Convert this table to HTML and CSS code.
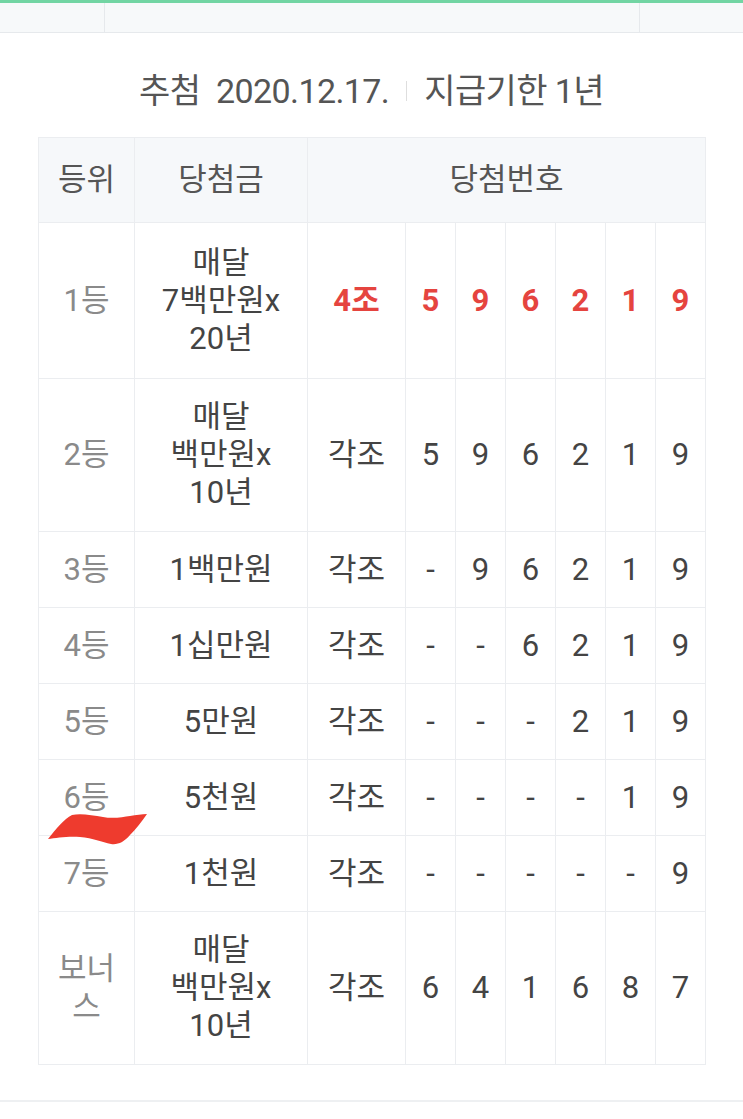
FILE: index.html
```html
<!DOCTYPE html>
<html lang="ko">
<head>
<meta charset="utf-8">
<link rel="stylesheet" href="styles.css">
</head>
<body>
<div class="topbar">
  <div class="tb-cell tb-left"></div>
  <div class="tb-cell tb-mid"></div>
  <div class="tb-cell tb-right"></div>
</div>
<main class="main">
  <h2 class="draw-info"><span>추첨&nbsp; 2020.12.17.</span><i class="sep"></i><span>지급기한 1년</span></h2>
  <div class="table-wrap">
    <table class="result">
      <colgroup>
        <col class="c-rank"><col class="c-prize"><col class="c-group">
        <col class="c-num"><col class="c-num"><col class="c-num"><col class="c-num"><col class="c-num"><col class="c-num">
      </colgroup>
      <thead>
        <tr class="r-head"><th>등위</th><th>당첨금</th><th colspan="7">당첨번호</th></tr>
      </thead>
      <tbody>
        <tr class="r-tall"><td class="rank">1등</td><td>매달<br>7백만원x<br>20년</td><td class="hl">4조</td><td class="hl">5</td><td class="hl">9</td><td class="hl">6</td><td class="hl">2</td><td class="hl">1</td><td class="hl">9</td></tr>
        <tr class="r-tall2"><td class="rank">2등</td><td>매달<br>백만원x<br>10년</td><td>각조</td><td>5</td><td>9</td><td>6</td><td>2</td><td>1</td><td>9</td></tr>
        <tr class="r-short"><td class="rank">3등</td><td>1백만원</td><td>각조</td><td>-</td><td>9</td><td>6</td><td>2</td><td>1</td><td>9</td></tr>
        <tr class="r-short"><td class="rank">4등</td><td>1십만원</td><td>각조</td><td>-</td><td>-</td><td>6</td><td>2</td><td>1</td><td>9</td></tr>
        <tr class="r-short"><td class="rank">5등</td><td>5만원</td><td>각조</td><td>-</td><td>-</td><td>-</td><td>2</td><td>1</td><td>9</td></tr>
        <tr class="r-short"><td class="rank">6등</td><td>5천원</td><td>각조</td><td>-</td><td>-</td><td>-</td><td>-</td><td>1</td><td>9</td></tr>
        <tr class="r-short"><td class="rank">7등</td><td>1천원</td><td>각조</td><td>-</td><td>-</td><td>-</td><td>-</td><td>-</td><td>9</td></tr>
        <tr class="r-tall2"><td class="rank">보너<br>스</td><td>매달<br>백만원x<br>10년</td><td>각조</td><td>6</td><td>4</td><td>1</td><td>6</td><td>8</td><td>7</td></tr>
      </tbody>
    </table>
    <svg class="scribble" width="112" height="36" viewBox="0 0 112 36" aria-hidden="true">
      <path d="M10 26 C18 16 26 6 34 2 C42 0 54 2 65 4 C75 6 85 4 92 3 C98 2 104 1 109 1 C104 8 98 16 92 22 C86 29 80 32 73 31 C64 29 55 25 42 24 C30 23 18 25 10 26 Z" fill="#ee3b2e"/>
    </svg>
  </div>
</main>
<div class="bottom-line"></div>
</body>
</html>
```
FILE: styles.css
```css
html, body {
  margin: 0;
  padding: 0;
  background: #ffffff;
}
body {
  width: 743px;
  height: 1119px;
  overflow: hidden;
  font-family: "Roboto", "Noto Sans CJK KR", sans-serif;
  color: #444;
}
.topbar {
  display: flex;
  height: 29px;
  border-top: 3px solid #72d5a3;
  border-bottom: 1px solid #e6e9ec;
  background: #f7f9fa;
}
.tb-cell { height: 100%; }
.tb-left { width: 104px; border-right: 1px solid #e6e9ec; }
.tb-mid { width: 534px; border-right: 1px solid #e6e9ec; }
.tb-right { flex: 1; }

.main {
  padding: 0 38px;
}
.draw-info {
  margin: 0;
  height: 104px;
  display: flex;
  align-items: center;
  justify-content: center;
  font-weight: 400;
  font-size: 34px;
  color: #555;
  letter-spacing: -0.6px;
  padding-top: 6px;
  box-sizing: border-box;
}
.sep {
  display: inline-block;
  width: 1px;
  height: 20px;
  background: #dedede;
  margin: 6px 17px 0;
}
.table-wrap {
  position: relative;
}
.result {
  border-collapse: collapse;
  width: 667px;
  table-layout: fixed;
  font-size: 31px;
  line-height: 38px;
}
.c-rank { width: 96px; }
.c-prize { width: 173px; }
.c-group { width: 98px; }
.c-num { width: 50px; }
.result th, .result td {
  border: 1px solid #ebedf0;
  text-align: center;
  vertical-align: middle;
  padding: 0;
  font-weight: 400;
  white-space: nowrap;
}
.result th {
  background: #f6f8fa;
  color: #555;
}
.r-head { height: 85px; }
.r-tall { height: 156px; }
.r-tall2 { height: 153px; }
.r-short { height: 76px; }
.result td.rank { color: #8a8a8a; }
.result td.hl { color: #e5443f; font-weight: 700; }
.scribble {
  position: absolute;
  left: 0;
  top: 676px;
}
.bottom-line {
  position: absolute;
  left: 0;
  top: 1100px;
  width: 743px;
  height: 2px;
  background: #eef0f2;
}
```
